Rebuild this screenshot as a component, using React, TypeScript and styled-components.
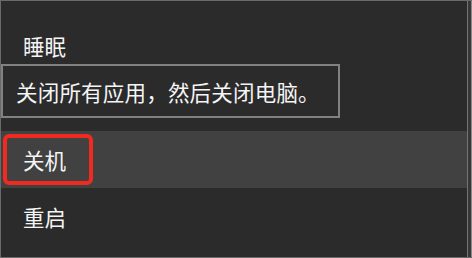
import React from 'react';
import styled, { createGlobalStyle } from 'styled-components';

const GlobalStyle = createGlobalStyle`
    html, body {
        margin: 0;
        padding: 0;
        background: #2b2b2b;
    }
    * {
        box-sizing: border-box;
    }
`;

const Frame = styled.div`
    width: 472px;
    height: 258px;
    display: flex;
    border-top: 1px solid #6a6a6a;
    border-left: 1px solid #6a6a6a;
    border-bottom: 1px solid #6a6a6a;
    background: #2b2b2b;
    font-family: "Noto Sans CJK SC", "Noto Sans", sans-serif;
    overflow: hidden;
`;

const Menu = styled.div`
    position: relative;
    flex: 1;
    display: flex;
    flex-direction: column;
    padding-top: 16px;
    border-right: 1px solid #737373;
`;

const Strip = styled.div`
    width: 4px;
    background: #383838;
    border-right: 1px solid #8a8a8a;
`;

const Item = styled.div<{ $active?: boolean; $gapAfter?: number }>`
    height: 57px;
    display: flex;
    align-items: center;
    padding-left: 22px;
    margin-bottom: ${p => p.$gapAfter ?? 0}px;
    background: ${p => (p.$active ? '#414141' : 'transparent')};
    color: #f5f5f5;
    font-size: 21.5px;
    position: relative;
`;

const Marker = styled.div`
    position: absolute;
    left: 2px;
    top: 3px;
    width: 90px;
    height: 51px;
    border: 4px solid #f02a20;
    border-radius: 6px;
`;

const Tooltip = styled.div`
    position: absolute;
    left: 0;
    top: 63px;
    width: 339px;
    height: 54px;
    display: flex;
    align-items: center;
    padding-left: 13px;
    background: #2b2b2b;
    border: 2px solid #818181;
    color: #f5f5f5;
    font-size: 21.5px;
    letter-spacing: 0.2px;
    white-space: nowrap;
`;

export default function App() {
	return (
		<>
			<GlobalStyle />
			<Frame>
				<Menu>
					<Item $gapAfter={57}>睡眠</Item>
					<Item $active>
						<Marker />
						关机
					</Item>
					<Item>重启</Item>
					<Tooltip>关闭所有应用，然后关闭电脑。</Tooltip>
				</Menu>
				<Strip />
			</Frame>
		</>
	);
}
